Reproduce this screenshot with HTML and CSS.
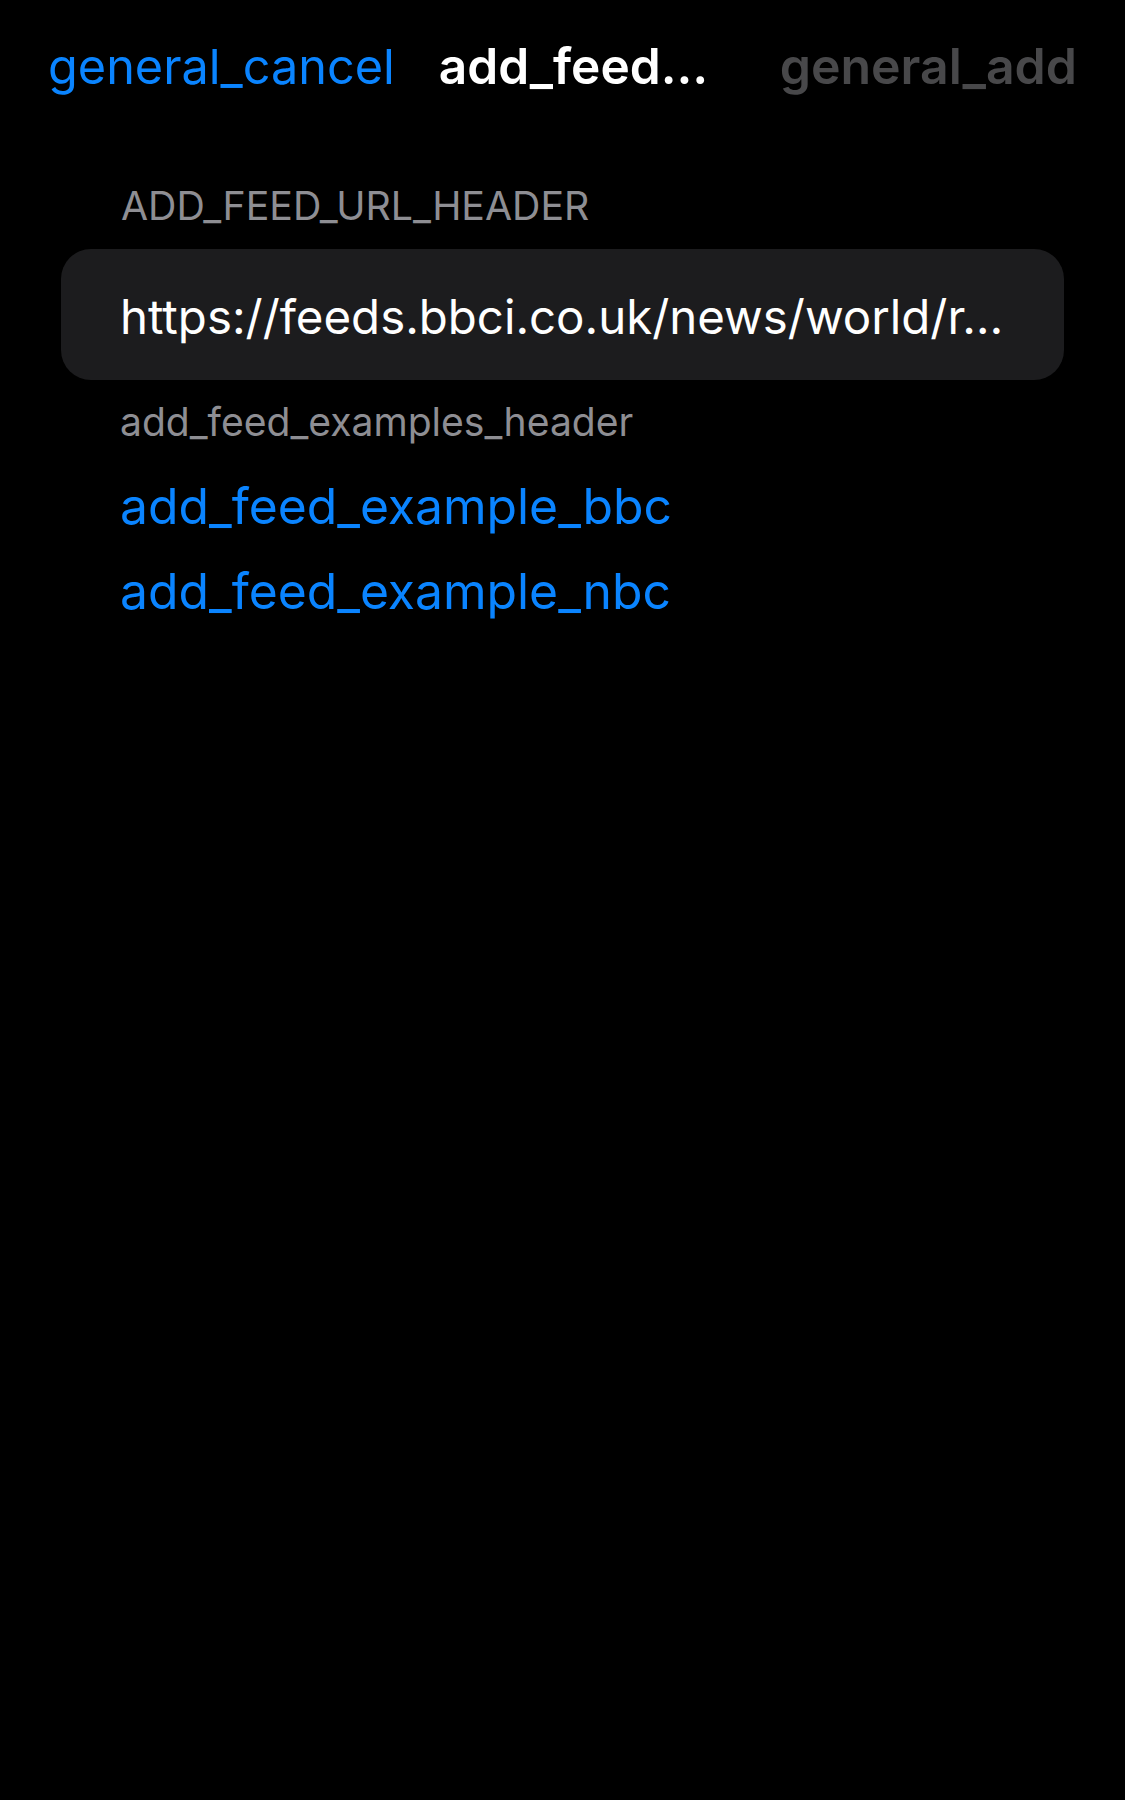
FILE: index.html
```html
<!DOCTYPE html>
<html>
<head>
<meta charset="utf-8">
<link rel="stylesheet" href="styles.css">
</head>
<body>
<div class="sheet">
  <nav class="navbar">
    <span class="nav-cancel">general_cancel</span>
    <span class="nav-title">add_feed…</span>
    <span class="nav-add">general_add</span>
  </nav>
  <main class="form">
    <div class="section-header">ADD_FEED_URL_HEADER</div>
    <div class="field">
      <span class="field-text">https://feeds.bbci.co.uk/news/world/r…</span>
    </div>
    <div class="section-footer">add_feed_examples_header</div>
    <div class="examples">
      <div class="example-link">add_feed_example_bbc</div>
      <div class="example-link">add_feed_example_nbc</div>
    </div>
  </main>
</div>
</body>
</html>
```

FILE: styles.css
```css
html, body {
  margin: 0;
  padding: 0;
  background: #000000;
}

body {
  font-family: Inter, "Noto Sans", sans-serif;
  color: #ffffff;
  width: 1125px;
  min-height: 1800px;
}

.sheet {
  display: flex;
  flex-direction: column;
}

.navbar {
  display: flex;
  align-items: baseline;
  padding: 36px 48px 0 48px;
  height: 60px;
  line-height: 60px;
}

.nav-cancel {
  font-size: 48.6px;
  font-weight: 400;
  color: #0a84ff;
}

.nav-title {
  font-size: 49.6px;
  font-weight: 600;
  color: #ffffff;
  margin-left: 44px;
}

.nav-add {
  font-size: 50px;
  font-weight: 600;
  color: #48484a;
  margin-left: auto;
}

.form {
  display: flex;
  flex-direction: column;
  margin: 86px 61px 0 61px;
}

.section-header {
  font-size: 39.3px;
  line-height: 48px;
  color: #8e8e93;
  padding-left: 60px;
}

.field {
  margin-top: 19px;
  height: 131px;
  box-sizing: border-box;
  background: #1c1c1e;
  border-radius: 30px;
  display: flex;
  align-items: center;
  padding: 5px 59px 0 59px;
}

.field-text {
  font-size: 47.4px;
  line-height: 60px;
  color: #ffffff;
  white-space: nowrap;
}

.section-footer {
  margin-top: 18px;
  font-size: 39.1px;
  line-height: 48px;
  color: #8e8e93;
  padding-left: 59px;
}

.examples {
  display: flex;
  flex-direction: column;
  margin-top: 18px;
}

.example-link {
  font-size: 49.8px;
  line-height: 85px;
  color: #0a84ff;
  padding-left: 59px;
}
```
